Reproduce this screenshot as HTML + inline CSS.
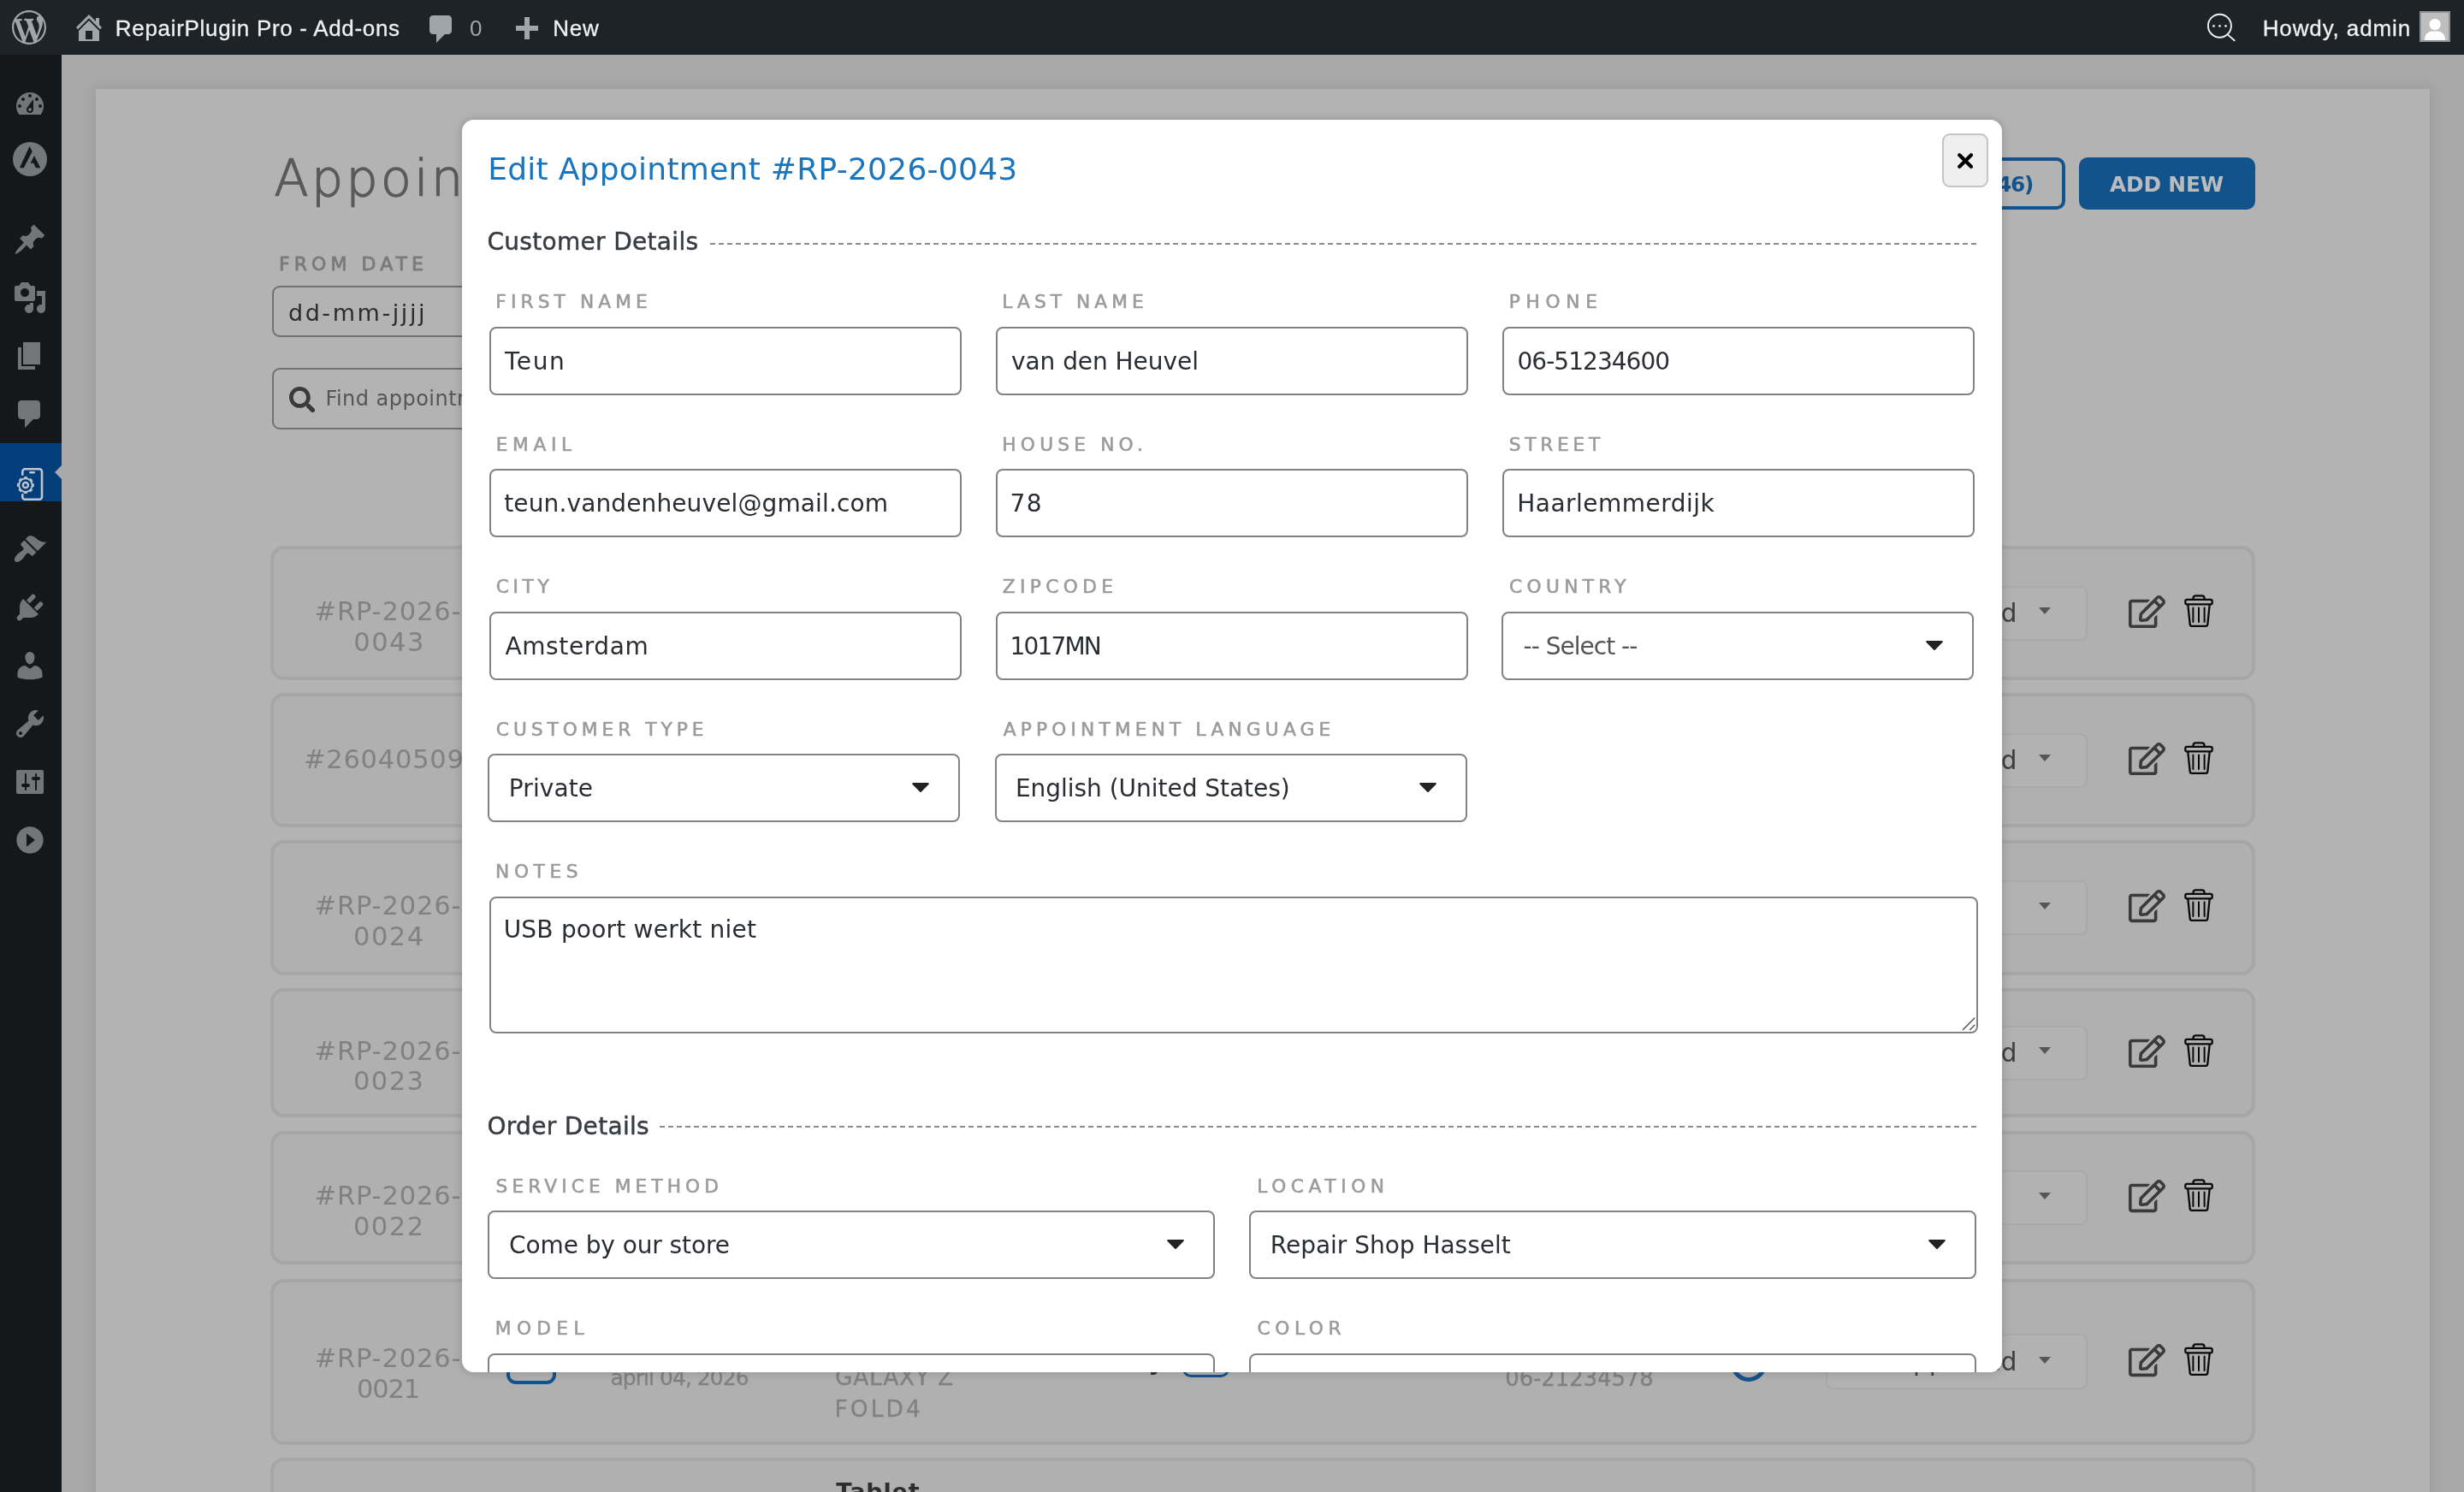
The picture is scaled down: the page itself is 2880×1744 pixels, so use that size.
<!DOCTYPE html>
<html lang="en"><head><meta charset="utf-8"><title>Appointments - RepairPlugin Pro</title>
<style>
*{box-sizing:border-box}
html,body{margin:0;padding:0}
body{width:2880px;height:1744px;overflow:hidden;position:relative;background:#a8a8a9;font-family:"DejaVu Sans","Liberation Sans",sans-serif}
@media (max-width:1600px){body{zoom:.5}}
#adminbar,#menu,#page,#modal{will-change:transform}
#page{position:absolute;left:0;top:0;width:2880px;height:1744px}
#adminbar{position:absolute;left:0;top:0;width:2880px;height:64px;background:#1d2327;z-index:50}
#menu{position:absolute;left:0;top:64px;width:72px;height:1680px;background:#14181b;z-index:40}
#card{position:absolute;left:112px;top:104px;width:2728px;height:1700px;background:#b3b3b3;box-shadow:0 0 14px rgba(0,0,0,.10)}
#modal{position:absolute;left:540px;top:140px;width:1800px;height:1464px;background:#fff;border-radius:14px;overflow:hidden;z-index:30;}
#mshadow{position:absolute;left:540px;top:140px;width:1800px;height:1464px;border-radius:14px;box-shadow:0 0 12px rgba(0,0,0,.2);z-index:29}
.in{position:absolute;height:80px;border:2px solid #818383;border-radius:8px;background:#fff}
.sel{position:absolute;height:80px;border:2px solid #818383;border-radius:8px;background:#fff}
.dash{position:absolute;height:2px;background:repeating-linear-gradient(90deg,#8b8b8b 0 6px,transparent 6px 10px)}
</style></head><body>

<div id="adminbar">
<svg style="position:absolute;left:14px;top:12px;" width="40" height="40" viewBox="0 0 20 20"><path fill="#a0a5aa" d="M20 10c0-5.51-4.49-10-10-10C4.48 0 0 4.49 0 10c0 5.52 4.48 10 10 10 5.51 0 10-4.48 10-10zM7.78 15.37L4.37 6.22c.55-.02 1.17-.08 1.17-.08.5-.06.44-1.13-.06-1.11 0 0-1.45.11-2.37.11-.18 0-.37 0-.58-.01C4.12 2.69 6.87 1.11 10 1.11c2.33 0 4.45.87 6.05 2.34-.68-.11-1.65.39-1.65 1.58 0 .74.45 1.36.9 2.1.35.61.55 1.36.55 2.46 0 1.49-1.4 5-1.4 5l-3.03-8.37c.54-.02.82-.17.82-.17.5-.05.44-1.25-.06-1.22 0 0-1.44.12-2.38.12-.87 0-2.33-.12-2.33-.12-.5-.03-.56 1.2-.06 1.22l.92.08 1.26 3.41zM17.41 10c.24-.64.74-1.87.43-4.25.7 1.29 1.05 2.71 1.05 4.25 0 3.29-1.73 6.24-4.4 7.78.97-2.59 1.94-5.2 2.92-7.78zM6.1 18.09C3.12 16.65 1.11 13.53 1.11 10c0-1.3.23-2.48.72-3.59C3.25 10.3 4.67 14.2 6.1 18.09zm4.03-6.63l2.58 6.98c-.86.29-1.76.45-2.71.45-.79 0-1.57-.11-2.29-.33.81-2.38 1.62-4.74 2.42-7.1z"/></svg>
<svg style="position:absolute;left:84px;top:12px;" width="40" height="40" viewBox="0 0 20 20"><path fill="#a0a5aa" d="M16 8.5l1.53 1.53-1.06 1.06L10 4.62l-6.47 6.47-1.06-1.06L10 2.5l4 4v-2h2v4zm-6-2.46l6 5.99V18H4v-5.97zM12 17v-5H8v5h4z"/></svg>
<span style="position:absolute;left:134.87px;top:20.0px;font-family:'Liberation Sans','DejaVu Sans',sans-serif;font-size:26px;line-height:1;color:#f0f0f1;font-weight:400;letter-spacing:0.688px;white-space:nowrap;-webkit-text-stroke:0.3px #f0f0f1;">RepairPlugin Pro - Add-ons</span>
<svg style="position:absolute;left:496px;top:14px;" width="40" height="40" viewBox="0 0 20 20"><path fill="#a0a5aa" d="M5 2h9c1.1 0 2 .9 2 2v7c0 1.1-.9 2-2 2h-2l-5 5v-5H5c-1.1 0-2-.9-2-2V4c0-1.1.9-2 2-2z"/></svg>
<span style="position:absolute;left:549.00px;top:20.0px;font-family:'Liberation Sans','DejaVu Sans',sans-serif;font-size:26px;line-height:1;color:#a0a5aa;font-weight:400;letter-spacing:0.000px;white-space:nowrap;">0</span>
<svg style="position:absolute;left:594.5px;top:15.5px;" width="40" height="40" viewBox="0 0 20 20"><path fill="#a0a5aa" d="M17 7v3h-5v5H9v-5H4V7h5V2h3v5h5z"/></svg>
<span style="position:absolute;left:646.37px;top:20.0px;font-family:'Liberation Sans','DejaVu Sans',sans-serif;font-size:26px;line-height:1;color:#f0f0f1;font-weight:400;letter-spacing:0.728px;white-space:nowrap;-webkit-text-stroke:0.3px #f0f0f1;">New</span>
<svg style="position:absolute;left:2576px;top:12px" width="44" height="44" viewBox="0 0 44 44"><circle cx="18.400" cy="18.200" r="13.500" fill="none" stroke="#f0f0f1" stroke-width="1.900"/><path d="M28 28.600L35.600 35.300" stroke="#f0f0f1" stroke-width="1.900" stroke-linecap="round"/><circle cx="11.500" cy="18.400" r="1.350" fill="#f0f0f1"/><circle cx="18.500" cy="18.400" r="1.350" fill="#f0f0f1"/><circle cx="25.500" cy="18.400" r="1.350" fill="#f0f0f1"/></svg>
<span style="position:absolute;left:2644.67px;top:20.0px;font-family:'Liberation Sans','DejaVu Sans',sans-serif;font-size:26px;line-height:1;color:#f0f0f1;font-weight:400;letter-spacing:0.883px;white-space:nowrap;-webkit-text-stroke:0.3px #f0f0f1;">Howdy, admin</span>
<div style="position:absolute;left:2828px;top:13px;width:36px;height:36px;background:#bebebe;border:2px solid #8f9295;overflow:hidden"><svg width="32" height="32" viewBox="0 0 32 32" style="position:absolute;left:0;top:0"><circle cx="16.100" cy="13.500" r="6.600" fill="#fff"/><path d="M4 32c0-7 3.500-9.500 8-10.500h8c4.500 1 8 3.500 8 10.500z" fill="#fff"/></svg></div>
</div>
<div id="menu">
<svg style="position:absolute;left:15.0px;top:38.0px;" width="40" height="40" viewBox="0 0 20 20"><path fill="#737679" d="M3.76 16h12.48c1.1-1.37 1.76-3.11 1.76-5 0-4.42-3.58-8-8-8s-8 3.58-8 8c0 1.89.66 3.63 1.76 5zM10 4c.55 0 1 .45 1 1s-.45 1-1 1-1-.45-1-1 .45-1 1-1zM6 6c.55 0 1 .45 1 1s-.45 1-1 1-1-.45-1-1 .45-1 1-1zm8 0c.55 0 1 .45 1 1s-.45 1-1 1-1-.45-1-1 .45-1 1-1zm-5.37 5.55L12 7v6c0 1.1-.9 2-2 2s-2-.9-2-2c0-.57.24-1.08.63-1.45zM4 10c.55 0 1 .45 1 1s-.45 1-1 1-1-.45-1-1 .45-1 1-1zm12 0c.55 0 1 .45 1 1s-.45 1-1 1-1-.45-1-1 .45-1 1-1zm-5 3c0-.55-.45-1-1-1s-1 .45-1 1 .45 1 1 1 1-.45 1-1z"/></svg>
<svg style="position:absolute;left:15px;top:102px" width="40" height="40" viewBox="0 0 40 40"><circle cx="20" cy="20" r="20" fill="#73787b"/><path d="M19.500 5.100l3.200 5.800-9.900 19.300H7.900z M25 16.100l7.300 14.100H27l-2.700-5.400h-3.700z" fill="#14181b"/></svg>
<svg style="position:absolute;left:15.0px;top:196.0px;" width="40" height="40" viewBox="0 0 20 20"><path fill="#737679" d="M10.44 3.02l1.82-1.82 6.36 6.35-1.83 1.82c-1.05-.68-2.48-.57-3.41.36l-.75.75c-.92.93-1.04 2.35-.35 3.41l-1.83 1.82-2.41-2.41-2.8 2.79c-.42.42-3.38 2.71-3.8 2.29s1.86-3.39 2.28-3.81l2.79-2.79L4.1 9.36l1.83-1.82c1.05.69 2.48.57 3.4-.36l.75-.75c.93-.92 1.05-2.35.36-3.41z"/></svg>
<svg style="position:absolute;left:15.0px;top:264.0px;" width="40" height="40" viewBox="0 0 20 20"><path fill="#737679" d="M13 11V4c0-.55-.45-1-1-1h-1.67L9 1H5L3.67 3H2c-.55 0-1 .45-1 1v7c0 .55.45 1 1 1h10c.55 0 1-.45 1-1zM7 4.5c1.38 0 2.5 1.12 2.5 2.5S8.38 9.5 7 9.5 4.5 8.38 4.5 7 5.62 4.5 7 4.5zM14 6h5v10.5c0 1.38-1.12 2.5-2.5 2.5S14 17.880 14 16.5s1.12-2.5 2.5-2.5c.17 0 .34.02.5.05V9h-3V6zm-4 8.050V13h2v3.5c0 1.38-1.12 2.5-2.5 2.5S7 17.880 7 16.5 8.12 14 9.5 14c.17 0 .34.02.5.05z"/></svg>
<svg style="position:absolute;left:15.0px;top:332.0px;" width="40" height="40" viewBox="0 0 20 20"><path fill="#737679" d="M6 15V2h10v13H6zm-1 1h8v2H3V5h2v11z"/></svg>
<svg style="position:absolute;left:15.0px;top:400.0px;" width="40" height="40" viewBox="0 0 20 20"><path fill="#737679" d="M5 2h9c1.1 0 2 .9 2 2v7c0 1.1-.9 2-2 2h-2l-5 5v-5H5c-1.1 0-2-.9-2-2V4c0-1.1.9-2 2-2z"/></svg>
<div style="position:absolute;left:0;top:454px;width:72px;height:68px;background:#033e7a"></div>
<div style="position:absolute;left:64px;top:480px;width:0;height:0;border-top:8px solid transparent;border-bottom:8px solid transparent;border-right:8px solid #a8a8a9"></div>
<svg style="position:absolute;left:8px;top:466px" width="64" height="64" viewBox="0 0 64 64"><path d="M18.300 24.800V21.300a3 3 0 0 1 3-3H38a3 3 0 0 1 3 3V50.800a3 3 0 0 1-3 3H21.300a3 3 0 0 1-3-3V48.400" fill="none" stroke="#c0c6d0" stroke-width="2.600" stroke-linecap="round"/><path d="M27.400 22.200h4.400" stroke="#c0c6d0" stroke-width="2.400" stroke-linecap="round"/><circle cx="21.900" cy="37.100" r="3.100" fill="none" stroke="#c0c6d0" stroke-width="2.300"/><circle cx="21.900" cy="37.100" r="7.800" fill="none" stroke="#c0c6d0" stroke-width="1.900"/><circle cx="21.900" cy="37.100" r="9.100" fill="none" stroke="#c0c6d0" stroke-width="1.800" stroke-dasharray="4.100 3.050" stroke-dashoffset="2.050"/></svg>
<svg style="position:absolute;left:15.0px;top:558.0px;" width="40" height="40" viewBox="0 0 20 20"><path fill="#737679" d="M14.48 11.06L7.41 3.99l1.5-1.5c.5-.56 2.3-.47 3.51.32 1.21.8 1.43 1.28 2.91 2.1 1.18.64 2.45 1.26 4.45.85zm-.71.71L6.7 4.7 4.93 6.47c-.39.39-.39 1.02 0 1.41l1.06 1.06c.39.39.39 1.03 0 1.42-.6.6-1.43 1.11-2.21 1.69-.35.26-.7.53-1.01.84C1.43 14.23.4 16.08 1.4 17.07c.99 1 2.84-.03 4.18-1.36.31-.31.58-.66.85-1.02.57-.78 1.08-1.61 1.69-2.21.39-.39 1.02-.39 1.41 0l1.06 1.06c.39.39 1.02.39 1.41 0z"/></svg>
<svg style="position:absolute;left:15.0px;top:626.0px;" width="40" height="40" viewBox="0 0 20 20"><path fill="#737679" d="M13.11 4.36L9.87 7.6 8 5.73l3.24-3.24c.35-.34 1.05-.2 1.56.32.52.51.66 1.21.31 1.55zm-8 1.77l.91-1.12 9.01 9.01-1.19.84c-.71.71-2.63 1.16-3.82 1.16H6.14L4.9 17.26c-.59.59-1.54.59-2.12 0-.59-.58-.59-1.53 0-2.12l1.24-1.24v-3.88c0-1.13.4-3.19 1.09-3.89zm7.26 3.97l3.24-3.24c.34-.35 1.04-.21 1.55.31.52.51.66 1.21.31 1.55l-3.24 3.25z"/></svg>
<svg style="position:absolute;left:15.0px;top:694.0px;" width="40" height="40" viewBox="0 0 20 20"><path fill="#737679" d="M10 9.25c-2.27 0-2.73-3.44-2.73-3.44C7 4.02 7.82 2 9.97 2c2.16 0 2.98 2.02 2.71 3.81 0 0-.41 3.44-2.68 3.44zm0 2.57L12.72 10c2.39 0 4.52 2.33 4.52 4.53v2.49s-3.65 1.13-7.24 1.13c-3.65 0-7.24-1.13-7.24-1.13v-2.49c0-2.25 1.94-4.48 4.47-4.48z"/></svg>
<svg style="position:absolute;left:15.0px;top:762.0px;" width="40" height="40" viewBox="0 0 20 20"><path fill="#737679" d="M16.68 9.77c-1.34 1.34-3.3 1.67-4.95.99l-5.41 6.52c-.99.99-2.59.99-3.58 0s-.99-2.59 0-3.57l6.52-5.42c-.68-1.65-.35-3.61.99-4.95 1.28-1.28 3.12-1.62 4.72-1.06l-2.89 2.89 2.82 2.82 2.86-2.87c.53 1.58.18 3.39-1.08 4.65zM3.81 16.21c.4.39 1.04.39 1.43 0 .4-.4.4-1.04 0-1.43-.39-.4-1.03-.4-1.43 0-.39.39-.39 1.03 0 1.43z"/></svg>
<svg style="position:absolute;left:15.0px;top:830.0px;" width="40" height="40" viewBox="0 0 20 20"><path fill="#737679" d="M18 16V4c0-.55-.45-1-1-1H3c-.55 0-1 .45-1 1v12c0 .55.45 1 1 1h14c.55 0 1-.45 1-1zM8 11h1c.55 0 1 .45 1 1s-.45 1-1 1H8v1.5c0 .28-.22.5-.5.5s-.5-.22-.5-.5V13H6c-.55 0-1-.45-1-1s.45-1 1-1h1V5.5c0-.28.22-.5.5-.5s.5.22.5.5V11zm5-2h-1c-.55 0-1-.45-1-1s.45-1 1-1h1V5.5c0-.28.22-.5.5-.5s.5.22.5.5V7h1c.55 0 1 .45 1 1s-.45 1-1 1h-1v5.5c0 .28-.22.5-.5.5s-.5-.22-.5-.5V9z"/></svg>
<svg style="position:absolute;left:15.0px;top:898.0px;transform:rotate(180deg)" width="40" height="40" viewBox="0 0 20 20"><path fill="#737679" d="M10 2.16c4.33 0 7.84 3.51 7.84 7.84s-3.51 7.84-7.84 7.84S2.16 14.33 2.16 10 5.67 2.16 10 2.16zm2 11.72V6.12L7 10z"/></svg>
</div>
<div id="page"><div id="card"></div>
<span style="position:absolute;left:320.56px;top:180.3px;font-family:'DejaVu Sans','Liberation Sans',sans-serif;font-size:58.5px;line-height:1;color:#5a5a5a;font-weight:200;letter-spacing:3.424px;white-space:nowrap;-webkit-text-stroke:1.4px #5a5a5a;">Appointments</span>
<span style="position:absolute;left:326.04px;top:297.8px;font-family:'DejaVu Sans','Liberation Sans',sans-serif;font-size:22px;line-height:1;color:#7a7a7a;font-weight:400;letter-spacing:5.063px;white-space:nowrap;-webkit-text-stroke:0.8px #7a7a7a;">FROM DATE</span>
<div style="position:absolute;left:318px;top:334px;width:420px;height:60px;border:2px solid #707070;border-radius:9px"></div>
<span style="position:absolute;left:336.91px;top:351.5px;font-family:'DejaVu Sans','Liberation Sans',sans-serif;font-size:27px;line-height:1;color:#2c2c2c;font-weight:400;letter-spacing:2.583px;white-space:nowrap;">dd-mm-jjjj</span>
<div style="position:absolute;left:318px;top:430px;width:700px;height:72px;border:2px solid #707070;border-radius:9px"></div>
<svg style="position:absolute;left:337.7px;top:451.6px;" width="30.5" height="30.5" viewBox="0 0 512 512"><path fill="#3a3a3a" d="M505 442.7L405.3 343c-4.500-4.500-10.600-7-17-7H372c27.600-35.300 44-79.700 44-128C416 93.100 322.900 0 208 0S0 93.100 0 208s93.100 208 208 208c48.300 0 92.700-16.400 128-44v16.300c0 6.400 2.500 12.500 7 17l99.700 99.700c9.400 9.400 24.600 9.400 33.900 0l28.300-28.300c9.400-9.400 9.400-24.600.1-34zM208 336c-70.700 0-128-57.200-128-128 0-70.700 57.200-128 128-128 70.700 0 128 57.200 128 128 0 70.700-57.200 128-128 128z"/></svg>
<span style="position:absolute;left:380.44px;top:454.0px;font-family:'DejaVu Sans','Liberation Sans',sans-serif;font-size:24px;line-height:1;color:#555;font-weight:400;letter-spacing:0.471px;white-space:nowrap;">Find appointments</span>
<div style="position:absolute;left:2100px;top:184px;width:314px;height:61px;border:4px solid #14538c;border-radius:10px"></div>
<span style="position:absolute;left:2323.85px;top:203.8px;font-family:'DejaVu Sans','Liberation Sans',sans-serif;font-size:24.8px;line-height:1;color:#14538c;font-weight:700;letter-spacing:-1.200px;white-space:nowrap;">(46)</span>
<div style="position:absolute;left:2430px;top:184px;width:206px;height:61px;background:#11538a;border-radius:10px"></div>
<span style="position:absolute;left:2465.88px;top:203.8px;font-family:'DejaVu Sans','Liberation Sans',sans-serif;font-size:24.8px;line-height:1;color:#b9bcbf;font-weight:700;letter-spacing:-0.126px;white-space:nowrap;">ADD NEW</span>
<div style="position:absolute;left:316px;top:638px;width:2320px;height:157px;background:#b0b0b1;border:4px solid #a6a6a7;border-radius:16px"></div>
<span style="position:absolute;left:367.55px;top:700.0px;font-family:'DejaVu Sans','Liberation Sans',sans-serif;font-size:30.5px;line-height:1;color:#818183;font-weight:400;letter-spacing:0.855px;white-space:nowrap;">#RP-2026-</span>
<span style="position:absolute;left:413.19px;top:735.9px;font-family:'DejaVu Sans','Liberation Sans',sans-serif;font-size:30.5px;line-height:1;color:#818183;font-weight:400;letter-spacing:1.544px;white-space:nowrap;">0043</span>
<div style="position:absolute;left:2134px;top:684.5px;width:306px;height:64px;border:2px solid #a9a9aa;border-radius:8px;background:#b2b2b3"></div>
<span style="position:absolute;left:2215.77px;top:702.9px;font-family:'DejaVu Sans','Liberation Sans',sans-serif;font-size:29.5px;line-height:1;color:#3e3e3e;font-weight:400;letter-spacing:0.045px;white-space:nowrap;">Approved</span>
<div style="position:absolute;left:2382.800px;top:710.3px;width:0;height:0;border-left:7px solid transparent;border-right:7px solid transparent;border-top:8px solid #565656"></div>
<svg style="position:absolute;left:2487.5px;top:695.9px;height:38.200px" width="43" height="43" viewBox="0 0 576 512"><path fill="#3a3a3a" d="M402.3 344.9l32-32c5-5 13.7-1.5 13.7 5.7V464c0 26.5-21.5 48-48 48H48c-26.5 0-48-21.5-48-48V112c0-26.5 21.5-48 48-48h273.5c7.1 0 10.7 8.6 5.7 13.7l-32 32c-1.5 1.5-3.5 2.3-5.700 2.300H48v352h352V350.5c0-2.1.8-4.1 2.300-5.600zm156.600-201.800L296.300 405.700l-90.400 10c-26.200 2.900-48.500-19.200-45.600-45.600l10-90.400L432.900 17.100c22.900-22.900 59.900-22.900 82.700 0l43.200 43.200c22.900 22.900 22.900 60 .1 82.800zM460.100 174L402 115.900 216.200 301.800l-7.300 65.300 65.300-7.300L460.100 174zm64.800-79.700l-43.200-43.200c-4.100-4.100-10.800-4.100-14.800 0L436 82l58.100 58.100 30.900-30.900c4-4.200 4-10.800-.1-14.900z"/></svg>
<svg style="position:absolute;left:2553px;top:694.8px" width="34" height="38" viewBox="0 0 34 38"><path d="M10.500 6V4.200a2.900 2.900 0 0 1 2.900-2.900h7.200a2.900 2.900 0 0 1 2.900 2.900V6" fill="none" stroke="#0a0a0a" stroke-width="2.300"/><rect x="1.300" y="5.800" width="31.400" height="5.600" rx="2" fill="none" stroke="#0a0a0a" stroke-width="2.300"/><path d="M4.300 11.600L6.700 34.800a2.200 2.200 0 0 0 2.200 2h16.200a2.200 2.200 0 0 0 2.200-2L29.700 11.600" fill="none" stroke="#0a0a0a" stroke-width="2.300"/><path d="M10.400 15.500v16.500M17 15.500v16.500M23.600 15.500v16.500" stroke="#0a0a0a" stroke-width="2" stroke-linecap="round"/></svg>
<div style="position:absolute;left:316px;top:810px;width:2320px;height:157px;background:#b0b0b1;border:4px solid #a6a6a7;border-radius:16px"></div>
<span style="position:absolute;left:354.95px;top:872.8px;font-family:'DejaVu Sans','Liberation Sans',sans-serif;font-size:30.5px;line-height:1;color:#818183;font-weight:400;letter-spacing:0.773px;white-space:nowrap;">#260405097</span>
<div style="position:absolute;left:2134px;top:856.5px;width:306px;height:64px;border:2px solid #a9a9aa;border-radius:8px;background:#b2b2b3"></div>
<span style="position:absolute;left:2215.77px;top:874.9px;font-family:'DejaVu Sans','Liberation Sans',sans-serif;font-size:29.5px;line-height:1;color:#3e3e3e;font-weight:400;letter-spacing:0.045px;white-space:nowrap;">Approved</span>
<div style="position:absolute;left:2382.800px;top:882.3px;width:0;height:0;border-left:7px solid transparent;border-right:7px solid transparent;border-top:8px solid #565656"></div>
<svg style="position:absolute;left:2487.5px;top:867.9px;height:38.200px" width="43" height="43" viewBox="0 0 576 512"><path fill="#3a3a3a" d="M402.3 344.9l32-32c5-5 13.7-1.5 13.7 5.7V464c0 26.5-21.5 48-48 48H48c-26.5 0-48-21.5-48-48V112c0-26.5 21.5-48 48-48h273.5c7.1 0 10.7 8.6 5.7 13.7l-32 32c-1.5 1.5-3.5 2.3-5.700 2.300H48v352h352V350.5c0-2.1.8-4.1 2.300-5.600zm156.600-201.800L296.300 405.700l-90.400 10c-26.200 2.900-48.500-19.200-45.600-45.600l10-90.400L432.900 17.100c22.900-22.900 59.900-22.900 82.700 0l43.200 43.200c22.900 22.900 22.900 60 .1 82.800zM460.100 174L402 115.900 216.200 301.800l-7.300 65.300 65.300-7.300L460.100 174zm64.800-79.700l-43.200-43.200c-4.100-4.100-10.800-4.100-14.800 0L436 82l58.100 58.100 30.900-30.900c4-4.200 4-10.800-.1-14.900z"/></svg>
<svg style="position:absolute;left:2553px;top:866.8px" width="34" height="38" viewBox="0 0 34 38"><path d="M10.500 6V4.200a2.900 2.900 0 0 1 2.900-2.900h7.200a2.900 2.900 0 0 1 2.900 2.900V6" fill="none" stroke="#0a0a0a" stroke-width="2.300"/><rect x="1.300" y="5.800" width="31.400" height="5.600" rx="2" fill="none" stroke="#0a0a0a" stroke-width="2.300"/><path d="M4.300 11.600L6.700 34.800a2.200 2.200 0 0 0 2.200 2h16.200a2.200 2.200 0 0 0 2.200-2L29.700 11.600" fill="none" stroke="#0a0a0a" stroke-width="2.300"/><path d="M10.400 15.500v16.500M17 15.500v16.500M23.600 15.500v16.500" stroke="#0a0a0a" stroke-width="2" stroke-linecap="round"/></svg>
<div style="position:absolute;left:316px;top:982px;width:2320px;height:158px;background:#b0b0b1;border:4px solid #a6a6a7;border-radius:16px"></div>
<span style="position:absolute;left:367.55px;top:1043.5px;font-family:'DejaVu Sans','Liberation Sans',sans-serif;font-size:30.5px;line-height:1;color:#818183;font-weight:400;letter-spacing:0.855px;white-space:nowrap;">#RP-2026-</span>
<span style="position:absolute;left:412.99px;top:1079.5px;font-family:'DejaVu Sans','Liberation Sans',sans-serif;font-size:30.5px;line-height:1;color:#818183;font-weight:400;letter-spacing:1.501px;white-space:nowrap;">0024</span>
<div style="position:absolute;left:2134px;top:1029.0px;width:306px;height:64px;border:2px solid #a9a9aa;border-radius:8px;background:#b2b2b3"></div>
<div style="position:absolute;left:2382.800px;top:1054.8px;width:0;height:0;border-left:7px solid transparent;border-right:7px solid transparent;border-top:8px solid #565656"></div>
<svg style="position:absolute;left:2487.5px;top:1040.4px;height:38.200px" width="43" height="43" viewBox="0 0 576 512"><path fill="#3a3a3a" d="M402.3 344.9l32-32c5-5 13.7-1.5 13.7 5.7V464c0 26.5-21.5 48-48 48H48c-26.5 0-48-21.5-48-48V112c0-26.5 21.5-48 48-48h273.5c7.1 0 10.7 8.6 5.7 13.7l-32 32c-1.5 1.5-3.5 2.3-5.700 2.300H48v352h352V350.5c0-2.1.8-4.1 2.300-5.600zm156.600-201.800L296.300 405.700l-90.400 10c-26.200 2.900-48.500-19.200-45.600-45.600l10-90.400L432.900 17.100c22.900-22.900 59.900-22.900 82.700 0l43.200 43.200c22.900 22.900 22.900 60 .1 82.800zM460.100 174L402 115.900 216.200 301.800l-7.300 65.300 65.300-7.300L460.100 174zm64.800-79.700l-43.200-43.200c-4.100-4.100-10.800-4.100-14.800 0L436 82l58.100 58.100 30.900-30.900c4-4.200 4-10.800-.1-14.900z"/></svg>
<svg style="position:absolute;left:2553px;top:1039.3px" width="34" height="38" viewBox="0 0 34 38"><path d="M10.500 6V4.200a2.900 2.900 0 0 1 2.900-2.900h7.200a2.900 2.900 0 0 1 2.900 2.900V6" fill="none" stroke="#0a0a0a" stroke-width="2.300"/><rect x="1.300" y="5.800" width="31.400" height="5.600" rx="2" fill="none" stroke="#0a0a0a" stroke-width="2.300"/><path d="M4.300 11.600L6.700 34.800a2.200 2.200 0 0 0 2.200 2h16.200a2.200 2.200 0 0 0 2.200-2L29.700 11.600" fill="none" stroke="#0a0a0a" stroke-width="2.300"/><path d="M10.400 15.500v16.500M17 15.500v16.500M23.600 15.500v16.500" stroke="#0a0a0a" stroke-width="2" stroke-linecap="round"/></svg>
<div style="position:absolute;left:316px;top:1155px;width:2320px;height:151px;background:#b0b0b1;border:4px solid #a6a6a7;border-radius:16px"></div>
<span style="position:absolute;left:367.55px;top:1213.5px;font-family:'DejaVu Sans','Liberation Sans',sans-serif;font-size:30.5px;line-height:1;color:#818183;font-weight:400;letter-spacing:0.855px;white-space:nowrap;">#RP-2026-</span>
<span style="position:absolute;left:412.99px;top:1249.2px;font-family:'DejaVu Sans','Liberation Sans',sans-serif;font-size:30.5px;line-height:1;color:#818183;font-weight:400;letter-spacing:1.444px;white-space:nowrap;">0023</span>
<div style="position:absolute;left:2134px;top:1198.5px;width:306px;height:64px;border:2px solid #a9a9aa;border-radius:8px;background:#b2b2b3"></div>
<span style="position:absolute;left:2215.77px;top:1216.9px;font-family:'DejaVu Sans','Liberation Sans',sans-serif;font-size:29.5px;line-height:1;color:#3e3e3e;font-weight:400;letter-spacing:0.045px;white-space:nowrap;">Approved</span>
<div style="position:absolute;left:2382.800px;top:1224.3px;width:0;height:0;border-left:7px solid transparent;border-right:7px solid transparent;border-top:8px solid #565656"></div>
<svg style="position:absolute;left:2487.5px;top:1209.9px;height:38.200px" width="43" height="43" viewBox="0 0 576 512"><path fill="#3a3a3a" d="M402.3 344.9l32-32c5-5 13.7-1.5 13.7 5.7V464c0 26.5-21.5 48-48 48H48c-26.5 0-48-21.5-48-48V112c0-26.5 21.5-48 48-48h273.5c7.1 0 10.7 8.6 5.7 13.7l-32 32c-1.5 1.5-3.5 2.3-5.700 2.300H48v352h352V350.5c0-2.1.8-4.1 2.300-5.600zm156.600-201.800L296.300 405.700l-90.400 10c-26.200 2.900-48.500-19.200-45.600-45.600l10-90.400L432.900 17.100c22.900-22.900 59.900-22.900 82.700 0l43.200 43.200c22.900 22.900 22.900 60 .1 82.800zM460.100 174L402 115.900 216.200 301.800l-7.300 65.300 65.300-7.300L460.100 174zm64.800-79.700l-43.200-43.200c-4.100-4.100-10.800-4.100-14.800 0L436 82l58.100 58.100 30.900-30.900c4-4.200 4-10.800-.1-14.900z"/></svg>
<svg style="position:absolute;left:2553px;top:1208.8px" width="34" height="38" viewBox="0 0 34 38"><path d="M10.500 6V4.200a2.900 2.900 0 0 1 2.900-2.900h7.200a2.900 2.900 0 0 1 2.900 2.900V6" fill="none" stroke="#0a0a0a" stroke-width="2.300"/><rect x="1.300" y="5.800" width="31.400" height="5.600" rx="2" fill="none" stroke="#0a0a0a" stroke-width="2.300"/><path d="M4.300 11.600L6.700 34.800a2.200 2.200 0 0 0 2.200 2h16.200a2.200 2.200 0 0 0 2.200-2L29.700 11.600" fill="none" stroke="#0a0a0a" stroke-width="2.300"/><path d="M10.400 15.500v16.500M17 15.500v16.500M23.600 15.500v16.500" stroke="#0a0a0a" stroke-width="2" stroke-linecap="round"/></svg>
<div style="position:absolute;left:316px;top:1322px;width:2320px;height:156px;background:#b0b0b1;border:4px solid #a6a6a7;border-radius:16px"></div>
<span style="position:absolute;left:367.55px;top:1383.0px;font-family:'DejaVu Sans','Liberation Sans',sans-serif;font-size:30.5px;line-height:1;color:#818183;font-weight:400;letter-spacing:0.855px;white-space:nowrap;">#RP-2026-</span>
<span style="position:absolute;left:412.99px;top:1418.8px;font-family:'DejaVu Sans','Liberation Sans',sans-serif;font-size:30.5px;line-height:1;color:#818183;font-weight:400;letter-spacing:1.481px;white-space:nowrap;">0022</span>
<div style="position:absolute;left:2134px;top:1368.0px;width:306px;height:64px;border:2px solid #a9a9aa;border-radius:8px;background:#b2b2b3"></div>
<div style="position:absolute;left:2382.800px;top:1393.8px;width:0;height:0;border-left:7px solid transparent;border-right:7px solid transparent;border-top:8px solid #565656"></div>
<svg style="position:absolute;left:2487.5px;top:1379.4px;height:38.200px" width="43" height="43" viewBox="0 0 576 512"><path fill="#3a3a3a" d="M402.3 344.9l32-32c5-5 13.7-1.5 13.7 5.7V464c0 26.5-21.5 48-48 48H48c-26.5 0-48-21.5-48-48V112c0-26.5 21.5-48 48-48h273.5c7.1 0 10.7 8.6 5.7 13.7l-32 32c-1.5 1.5-3.5 2.3-5.700 2.300H48v352h352V350.5c0-2.1.8-4.1 2.300-5.600zm156.600-201.800L296.300 405.700l-90.400 10c-26.200 2.900-48.500-19.200-45.600-45.600l10-90.400L432.900 17.100c22.900-22.900 59.900-22.900 82.700 0l43.200 43.200c22.900 22.900 22.900 60 .1 82.800zM460.100 174L402 115.900 216.200 301.800l-7.300 65.300 65.300-7.300L460.100 174zm64.800-79.700l-43.200-43.200c-4.100-4.100-10.800-4.100-14.800 0L436 82l58.100 58.100 30.900-30.900c4-4.200 4-10.800-.1-14.900z"/></svg>
<svg style="position:absolute;left:2553px;top:1378.3px" width="34" height="38" viewBox="0 0 34 38"><path d="M10.500 6V4.200a2.900 2.900 0 0 1 2.900-2.900h7.200a2.900 2.900 0 0 1 2.900 2.900V6" fill="none" stroke="#0a0a0a" stroke-width="2.300"/><rect x="1.300" y="5.800" width="31.400" height="5.600" rx="2" fill="none" stroke="#0a0a0a" stroke-width="2.300"/><path d="M4.300 11.600L6.700 34.800a2.200 2.200 0 0 0 2.200 2h16.200a2.200 2.200 0 0 0 2.200-2L29.700 11.600" fill="none" stroke="#0a0a0a" stroke-width="2.300"/><path d="M10.400 15.500v16.500M17 15.500v16.500M23.600 15.500v16.500" stroke="#0a0a0a" stroke-width="2" stroke-linecap="round"/></svg>
<div style="position:absolute;left:316px;top:1495px;width:2320px;height:194px;background:#b0b0b1;border:4px solid #a6a6a7;border-radius:16px"></div>
<span style="position:absolute;left:367.55px;top:1573.2px;font-family:'DejaVu Sans','Liberation Sans',sans-serif;font-size:30.5px;line-height:1;color:#818183;font-weight:400;letter-spacing:0.855px;white-space:nowrap;">#RP-2026-</span>
<span style="position:absolute;left:416.99px;top:1609.0px;font-family:'DejaVu Sans','Liberation Sans',sans-serif;font-size:30.5px;line-height:1;color:#818183;font-weight:400;letter-spacing:-1.165px;white-space:nowrap;">0021</span>
<div style="position:absolute;left:2134px;top:1558.5px;width:306px;height:65px;border:2px solid #a9a9aa;border-radius:8px;background:#b2b2b3"></div>
<span style="position:absolute;left:2215.77px;top:1578.4px;font-family:'DejaVu Sans','Liberation Sans',sans-serif;font-size:29.5px;line-height:1;color:#3e3e3e;font-weight:400;letter-spacing:0.045px;white-space:nowrap;">Approved</span>
<div style="position:absolute;left:2382.800px;top:1585.8px;width:0;height:0;border-left:7px solid transparent;border-right:7px solid transparent;border-top:8px solid #565656"></div>
<svg style="position:absolute;left:2487.5px;top:1571.4px;height:38.200px" width="43" height="43" viewBox="0 0 576 512"><path fill="#3a3a3a" d="M402.3 344.9l32-32c5-5 13.7-1.5 13.7 5.7V464c0 26.5-21.5 48-48 48H48c-26.5 0-48-21.5-48-48V112c0-26.5 21.5-48 48-48h273.5c7.1 0 10.7 8.6 5.7 13.7l-32 32c-1.5 1.5-3.5 2.3-5.700 2.300H48v352h352V350.5c0-2.1.8-4.1 2.300-5.600zm156.600-201.800L296.300 405.700l-90.400 10c-26.200 2.900-48.500-19.200-45.600-45.600l10-90.400L432.900 17.100c22.900-22.900 59.900-22.900 82.700 0l43.200 43.200c22.900 22.900 22.900 60 .1 82.800zM460.100 174L402 115.900 216.200 301.800l-7.300 65.300 65.300-7.300L460.100 174zm64.800-79.700l-43.200-43.200c-4.100-4.100-10.800-4.100-14.800 0L436 82l58.100 58.100 30.900-30.900c4-4.200 4-10.800-.1-14.900z"/></svg>
<svg style="position:absolute;left:2553px;top:1570.3px" width="34" height="38" viewBox="0 0 34 38"><path d="M10.500 6V4.200a2.900 2.900 0 0 1 2.900-2.900h7.200a2.900 2.900 0 0 1 2.900 2.900V6" fill="none" stroke="#0a0a0a" stroke-width="2.300"/><rect x="1.300" y="5.800" width="31.400" height="5.600" rx="2" fill="none" stroke="#0a0a0a" stroke-width="2.300"/><path d="M4.300 11.600L6.700 34.800a2.200 2.200 0 0 0 2.200 2h16.200a2.200 2.200 0 0 0 2.200-2L29.700 11.600" fill="none" stroke="#0a0a0a" stroke-width="2.300"/><path d="M10.400 15.500v16.500M17 15.500v16.500M23.600 15.500v16.500" stroke="#0a0a0a" stroke-width="2" stroke-linecap="round"/></svg>
<div style="position:absolute;left:316px;top:1704px;width:2320px;height:166px;background:#b0b0b1;border:4px solid #a6a6a7;border-radius:16px"></div>
<span style="position:absolute;left:367.55px;top:1774.2px;font-family:'DejaVu Sans','Liberation Sans',sans-serif;font-size:30.5px;line-height:1;color:#818183;font-weight:400;letter-spacing:0.855px;white-space:nowrap;">#RP-2026-</span>
<span style="position:absolute;left:411.99px;top:1810.2px;font-family:'DejaVu Sans','Liberation Sans',sans-serif;font-size:30.5px;line-height:1;color:#818183;font-weight:400;letter-spacing:1.938px;white-space:nowrap;">0020</span>
<div style="position:absolute;left:2134px;top:1755.0px;width:306px;height:64px;border:2px solid #a9a9aa;border-radius:8px;background:#b2b2b3"></div>
<span style="position:absolute;left:2215.77px;top:1773.4px;font-family:'DejaVu Sans','Liberation Sans',sans-serif;font-size:29.5px;line-height:1;color:#3e3e3e;font-weight:400;letter-spacing:0.045px;white-space:nowrap;">Approved</span>
<div style="position:absolute;left:2382.800px;top:1780.8px;width:0;height:0;border-left:7px solid transparent;border-right:7px solid transparent;border-top:8px solid #565656"></div>
<svg style="position:absolute;left:2487.5px;top:1766.4px;height:38.200px" width="43" height="43" viewBox="0 0 576 512"><path fill="#3a3a3a" d="M402.3 344.9l32-32c5-5 13.7-1.5 13.7 5.7V464c0 26.5-21.5 48-48 48H48c-26.5 0-48-21.5-48-48V112c0-26.5 21.5-48 48-48h273.5c7.1 0 10.7 8.6 5.7 13.7l-32 32c-1.5 1.5-3.5 2.3-5.700 2.300H48v352h352V350.5c0-2.1.8-4.1 2.300-5.600zm156.600-201.800L296.300 405.700l-90.400 10c-26.200 2.900-48.500-19.200-45.600-45.600l10-90.400L432.900 17.100c22.900-22.900 59.900-22.900 82.700 0l43.200 43.200c22.900 22.900 22.900 60 .1 82.800zM460.100 174L402 115.900 216.200 301.800l-7.300 65.300 65.300-7.300L460.100 174zm64.800-79.700l-43.200-43.200c-4.100-4.100-10.800-4.100-14.800 0L436 82l58.100 58.100 30.900-30.900c4-4.200 4-10.800-.1-14.900z"/></svg>
<svg style="position:absolute;left:2553px;top:1765.3px" width="34" height="38" viewBox="0 0 34 38"><path d="M10.500 6V4.200a2.900 2.900 0 0 1 2.900-2.900h7.200a2.900 2.900 0 0 1 2.900 2.900V6" fill="none" stroke="#0a0a0a" stroke-width="2.300"/><rect x="1.300" y="5.800" width="31.400" height="5.600" rx="2" fill="none" stroke="#0a0a0a" stroke-width="2.300"/><path d="M4.300 11.600L6.700 34.800a2.200 2.200 0 0 0 2.200 2h16.200a2.200 2.200 0 0 0 2.200-2L29.700 11.600" fill="none" stroke="#0a0a0a" stroke-width="2.300"/><path d="M10.400 15.500v16.500M17 15.500v16.500M23.600 15.500v16.500" stroke="#0a0a0a" stroke-width="2" stroke-linecap="round"/></svg>
<span style="position:absolute;left:713.50px;top:1597.8px;font-family:'DejaVu Sans','Liberation Sans',sans-serif;font-size:25px;line-height:1;color:#818183;font-weight:400;letter-spacing:-0.966px;white-space:nowrap;-webkit-text-stroke:0.3px #818183;">april 04, 2026</span>
<span style="position:absolute;left:976.01px;top:1596.6px;font-family:'DejaVu Sans','Liberation Sans',sans-serif;font-size:26.5px;line-height:1;color:#818183;font-weight:400;letter-spacing:0.728px;white-space:nowrap;-webkit-text-stroke:0.3px #818183;">GALAXY Z</span>
<span style="position:absolute;left:975.40px;top:1634.1px;font-family:'DejaVu Sans','Liberation Sans',sans-serif;font-size:26.5px;line-height:1;color:#818183;font-weight:400;letter-spacing:3.090px;white-space:nowrap;-webkit-text-stroke:0.3px #818183;">FOLD4</span>
<span style="position:absolute;left:1759.29px;top:1598.0px;font-family:'DejaVu Sans','Liberation Sans',sans-serif;font-size:26px;line-height:1;color:#818183;font-weight:400;letter-spacing:-0.131px;white-space:nowrap;-webkit-text-stroke:0.3px #818183;">06-21234578</span>
<div style="position:absolute;left:592px;top:1560px;width:58px;height:58px;border:4px solid #14538c;border-radius:11px"></div>
<div style="position:absolute;left:1382px;top:1560px;width:55px;height:50px;border:3px solid #14538c;border-radius:10px"></div>
<div style="position:absolute;left:2022.500px;top:1573px;width:42px;height:42px;border:5px solid #14538c;border-radius:50%"></div>
<span style="position:absolute;left:1253.82px;top:1577.8px;font-family:'DejaVu Sans','Liberation Sans',sans-serif;font-size:28px;line-height:1;color:#2e2e2e;font-weight:700;letter-spacing:0.000px;white-space:nowrap;">Galaxy</span>
<span style="position:absolute;left:977.37px;top:1730.0px;font-family:'DejaVu Sans','Liberation Sans',sans-serif;font-size:27px;line-height:1;color:#2e2e2e;font-weight:700;letter-spacing:0.859px;white-space:nowrap;">Tablet</span>
</div><div id="mshadow"></div><div id="modal">
<span style="position:absolute;left:30.17px;top:39.7px;font-family:'DejaVu Sans','Liberation Sans',sans-serif;font-size:36px;line-height:1;color:#1b75bc;font-weight:400;letter-spacing:0.268px;white-space:nowrap;">Edit Appointment #RP-2026-0043</span>
<div style="position:absolute;left:1730px;top:16px;width:54px;height:63px;border:2px solid #c4c4c4;border-radius:9px;background:#efefef"></div>
<svg style="position:absolute;left:1748px;top:38.500px" width="18.200" height="18" viewBox="0 0 18.200 18"><path d="M2.300 2.300l13.600 13.400M15.900 2.300l-13.600 13.400" stroke="#000" stroke-width="4.300" stroke-linecap="round"/></svg>
<span style="position:absolute;left:29.43px;top:129.3px;font-family:'DejaVu Sans','Liberation Sans',sans-serif;font-size:28px;line-height:1;color:#383c41;font-weight:400;letter-spacing:0.311px;white-space:nowrap;-webkit-text-stroke:0.45px #383c41;">Customer Details</span>
<div class="dash" style="left:290px;top:144px;width:1480px;background:repeating-linear-gradient(90deg,#8b8b8b 0 6px,transparent 6px 10.027px)"></div>
<span style="position:absolute;left:39.37px;top:202.4px;font-family:'DejaVu Sans','Liberation Sans',sans-serif;font-size:21.7px;line-height:1;color:#9b9b9b;font-weight:400;letter-spacing:5.113px;white-space:nowrap;-webkit-text-stroke:0.6px #9b9b9b;">FIRST NAME</span>
<span style="position:absolute;left:631.37px;top:202.4px;font-family:'DejaVu Sans','Liberation Sans',sans-serif;font-size:21.7px;line-height:1;color:#9b9b9b;font-weight:400;letter-spacing:5.068px;white-space:nowrap;-webkit-text-stroke:0.6px #9b9b9b;">LAST NAME</span>
<span style="position:absolute;left:1223.67px;top:202.4px;font-family:'DejaVu Sans','Liberation Sans',sans-serif;font-size:21.7px;line-height:1;color:#9b9b9b;font-weight:400;letter-spacing:6.698px;white-space:nowrap;-webkit-text-stroke:0.6px #9b9b9b;">PHONE</span>
<div class="in" style="left:32px;top:242px;width:552px;height:80px"></div>
<div class="in" style="left:624px;top:242px;width:552px;height:80px"></div>
<div class="in" style="left:1216px;top:242px;width:552px;height:80px"></div>
<span style="position:absolute;left:49.98px;top:269.0px;font-family:'DejaVu Sans','Liberation Sans',sans-serif;font-size:28px;line-height:1;color:#2a2d31;font-weight:400;letter-spacing:1.544px;white-space:nowrap;">Teun</span>
<span style="position:absolute;left:641.97px;top:269.0px;font-family:'DejaVu Sans','Liberation Sans',sans-serif;font-size:28px;line-height:1;color:#2a2d31;font-weight:400;letter-spacing:-0.051px;white-space:nowrap;">van den Heuvel</span>
<span style="position:absolute;left:1233.45px;top:269.0px;font-family:'DejaVu Sans','Liberation Sans',sans-serif;font-size:28px;line-height:1;color:#2a2d31;font-weight:400;letter-spacing:-0.954px;white-space:nowrap;">06-51234600</span>
<span style="position:absolute;left:39.67px;top:368.5px;font-family:'DejaVu Sans','Liberation Sans',sans-serif;font-size:21.7px;line-height:1;color:#9b9b9b;font-weight:400;letter-spacing:5.670px;white-space:nowrap;-webkit-text-stroke:0.6px #9b9b9b;">EMAIL</span>
<span style="position:absolute;left:631.37px;top:368.5px;font-family:'DejaVu Sans','Liberation Sans',sans-serif;font-size:21.7px;line-height:1;color:#9b9b9b;font-weight:400;letter-spacing:5.197px;white-space:nowrap;-webkit-text-stroke:0.6px #9b9b9b;">HOUSE NO.</span>
<span style="position:absolute;left:1223.87px;top:368.5px;font-family:'DejaVu Sans','Liberation Sans',sans-serif;font-size:21.7px;line-height:1;color:#9b9b9b;font-weight:400;letter-spacing:4.716px;white-space:nowrap;-webkit-text-stroke:0.6px #9b9b9b;">STREET</span>
<div class="in" style="left:32px;top:408px;width:552px;height:80px"></div>
<div class="in" style="left:624px;top:408px;width:552px;height:80px"></div>
<div class="in" style="left:1216px;top:408px;width:552px;height:80px"></div>
<span style="position:absolute;left:49.25px;top:434.7px;font-family:'DejaVu Sans','Liberation Sans',sans-serif;font-size:28px;line-height:1;color:#2a2d31;font-weight:400;letter-spacing:0.121px;white-space:nowrap;">teun.vandenheuvel@gmail.com</span>
<span style="position:absolute;left:640.50px;top:434.7px;font-family:'DejaVu Sans','Liberation Sans',sans-serif;font-size:28px;line-height:1;color:#2a2d31;font-weight:400;letter-spacing:1.382px;white-space:nowrap;">78</span>
<span style="position:absolute;left:1233.25px;top:434.7px;font-family:'DejaVu Sans','Liberation Sans',sans-serif;font-size:28px;line-height:1;color:#2a2d31;font-weight:400;letter-spacing:0.477px;white-space:nowrap;">Haarlemmerdijk</span>
<span style="position:absolute;left:39.78px;top:534.5px;font-family:'DejaVu Sans','Liberation Sans',sans-serif;font-size:21.7px;line-height:1;color:#9b9b9b;font-weight:400;letter-spacing:4.638px;white-space:nowrap;-webkit-text-stroke:0.6px #9b9b9b;">CITY</span>
<span style="position:absolute;left:631.83px;top:534.5px;font-family:'DejaVu Sans','Liberation Sans',sans-serif;font-size:21.7px;line-height:1;color:#9b9b9b;font-weight:400;letter-spacing:5.360px;white-space:nowrap;-webkit-text-stroke:0.6px #9b9b9b;">ZIPCODE</span>
<span style="position:absolute;left:1224.08px;top:534.5px;font-family:'DejaVu Sans','Liberation Sans',sans-serif;font-size:21.7px;line-height:1;color:#9b9b9b;font-weight:400;letter-spacing:5.338px;white-space:nowrap;-webkit-text-stroke:0.6px #9b9b9b;">COUNTRY</span>
<div class="in" style="left:32px;top:575px;width:552px;height:80px"></div>
<div class="in" style="left:624px;top:575px;width:552px;height:80px"></div>
<span style="position:absolute;left:50.48px;top:602.0px;font-family:'DejaVu Sans','Liberation Sans',sans-serif;font-size:28px;line-height:1;color:#2a2d31;font-weight:400;letter-spacing:0.606px;white-space:nowrap;">Amsterdam</span>
<span style="position:absolute;left:640.42px;top:602.0px;font-family:'DejaVu Sans','Liberation Sans',sans-serif;font-size:28px;line-height:1;color:#2a2d31;font-weight:400;letter-spacing:-1.808px;white-space:nowrap;">1017MN</span>
<div class="sel" style="left:1215px;top:575px;width:552px"></div><span style="position:absolute;left:1240.53px;top:601.8px;font-family:'DejaVu Sans','Liberation Sans',sans-serif;font-size:28px;line-height:1;color:#555;font-weight:400;letter-spacing:-0.987px;white-space:nowrap;">-- Select --</span><svg style="position:absolute;left:1711px;top:609px" width="20" height="11" viewBox="0 0 20 11"><path d="M1.200 0h17.600a1 1 0 0 1 .75 1.700l-8.600 8.700a1.300 1.300 0 0 1-1.900 0L.45 1.700A1 1 0 0 1 1.200 0z" fill="#222"/></svg>
<span style="position:absolute;left:39.78px;top:701.9px;font-family:'DejaVu Sans','Liberation Sans',sans-serif;font-size:21.7px;line-height:1;color:#9b9b9b;font-weight:400;letter-spacing:4.995px;white-space:nowrap;-webkit-text-stroke:0.6px #9b9b9b;">CUSTOMER TYPE</span>
<span style="position:absolute;left:632.63px;top:701.9px;font-family:'DejaVu Sans','Liberation Sans',sans-serif;font-size:21.7px;line-height:1;color:#9b9b9b;font-weight:400;letter-spacing:5.190px;white-space:nowrap;-webkit-text-stroke:0.6px #9b9b9b;">APPOINTMENT LANGUAGE</span>
<div class="sel" style="left:30px;top:741px;width:552px"></div><span style="position:absolute;left:54.85px;top:767.8px;font-family:'DejaVu Sans','Liberation Sans',sans-serif;font-size:28px;line-height:1;color:#2a2d31;font-weight:400;letter-spacing:0.087px;white-space:nowrap;">Private</span><svg style="position:absolute;left:526px;top:775px" width="20" height="11" viewBox="0 0 20 11"><path d="M1.200 0h17.600a1 1 0 0 1 .75 1.700l-8.600 8.700a1.300 1.300 0 0 1-1.900 0L.45 1.700A1 1 0 0 1 1.200 0z" fill="#222"/></svg>
<div class="sel" style="left:623px;top:741px;width:552px"></div><span style="position:absolute;left:646.95px;top:767.8px;font-family:'DejaVu Sans','Liberation Sans',sans-serif;font-size:28px;line-height:1;color:#2a2d31;font-weight:400;letter-spacing:-0.032px;white-space:nowrap;">English (United States)</span><svg style="position:absolute;left:1119px;top:775px" width="20" height="11" viewBox="0 0 20 11"><path d="M1.200 0h17.600a1 1 0 0 1 .75 1.700l-8.600 8.700a1.300 1.300 0 0 1-1.900 0L.45 1.700A1 1 0 0 1 1.200 0z" fill="#222"/></svg>
<span style="position:absolute;left:39.07px;top:868.1px;font-family:'DejaVu Sans','Liberation Sans',sans-serif;font-size:21.7px;line-height:1;color:#9b9b9b;font-weight:400;letter-spacing:5.621px;white-space:nowrap;-webkit-text-stroke:0.6px #9b9b9b;">NOTES</span>
<div class="in" style="left:32px;top:908px;width:1740px;height:160px"></div>
<svg style="position:absolute;left:1752px;top:1048px" width="18" height="18" viewBox="0 0 18 18"><path d="M16.200 1.800L2 16M16.200 10L10.200 16" stroke="#555" stroke-width="1.500"/></svg>
<span style="position:absolute;left:48.67px;top:933.4px;font-family:'DejaVu Sans','Liberation Sans',sans-serif;font-size:28px;line-height:1;color:#2a2d31;font-weight:400;letter-spacing:0.212px;white-space:nowrap;">USB poort werkt niet</span>
<span style="position:absolute;left:29.43px;top:1162.7px;font-family:'DejaVu Sans','Liberation Sans',sans-serif;font-size:28px;line-height:1;color:#383c41;font-weight:400;letter-spacing:0.308px;white-space:nowrap;-webkit-text-stroke:0.45px #383c41;">Order Details</span>
<div class="dash" style="left:231px;top:1176px;width:1539px;background:repeating-linear-gradient(90deg,#8b8b8b 0 6px,transparent 6px 10.020px)"></div>
<span style="position:absolute;left:39.57px;top:1235.9px;font-family:'DejaVu Sans','Liberation Sans',sans-serif;font-size:21.7px;line-height:1;color:#9b9b9b;font-weight:400;letter-spacing:5.103px;white-space:nowrap;-webkit-text-stroke:0.6px #9b9b9b;">SERVICE METHOD</span>
<span style="position:absolute;left:929.27px;top:1235.9px;font-family:'DejaVu Sans','Liberation Sans',sans-serif;font-size:21.7px;line-height:1;color:#9b9b9b;font-weight:400;letter-spacing:5.598px;white-space:nowrap;-webkit-text-stroke:0.6px #9b9b9b;">LOCATION</span>
<div class="sel" style="left:30px;top:1275px;width:850px"></div><span style="position:absolute;left:55.03px;top:1301.8px;font-family:'DejaVu Sans','Liberation Sans',sans-serif;font-size:28px;line-height:1;color:#2a2d31;font-weight:400;letter-spacing:-0.086px;white-space:nowrap;">Come by our store</span><svg style="position:absolute;left:824px;top:1309px" width="20" height="11" viewBox="0 0 20 11"><path d="M1.200 0h17.600a1 1 0 0 1 .75 1.700l-8.600 8.700a1.300 1.300 0 0 1-1.900 0L.45 1.700A1 1 0 0 1 1.200 0z" fill="#222"/></svg>
<div class="sel" style="left:920px;top:1275px;width:850px"></div><span style="position:absolute;left:944.75px;top:1301.8px;font-family:'DejaVu Sans','Liberation Sans',sans-serif;font-size:28px;line-height:1;color:#2a2d31;font-weight:400;letter-spacing:-0.018px;white-space:nowrap;">Repair Shop Hasselt</span><svg style="position:absolute;left:1714px;top:1309px" width="20" height="11" viewBox="0 0 20 11"><path d="M1.200 0h17.600a1 1 0 0 1 .75 1.700l-8.600 8.700a1.300 1.300 0 0 1-1.900 0L.45 1.700A1 1 0 0 1 1.200 0z" fill="#222"/></svg>
<span style="position:absolute;left:38.87px;top:1402.1px;font-family:'DejaVu Sans','Liberation Sans',sans-serif;font-size:21.7px;line-height:1;color:#9b9b9b;font-weight:400;letter-spacing:6.333px;white-space:nowrap;-webkit-text-stroke:0.6px #9b9b9b;">MODEL</span>
<span style="position:absolute;left:929.48px;top:1402.1px;font-family:'DejaVu Sans','Liberation Sans',sans-serif;font-size:21.7px;line-height:1;color:#9b9b9b;font-weight:400;letter-spacing:5.609px;white-space:nowrap;-webkit-text-stroke:0.6px #9b9b9b;">COLOR</span>
<div class="sel" style="left:30px;top:1442px;width:850px"></div><svg style="position:absolute;left:824px;top:1476px" width="20" height="11" viewBox="0 0 20 11"><path d="M1.200 0h17.600a1 1 0 0 1 .75 1.700l-8.600 8.700a1.300 1.300 0 0 1-1.900 0L.45 1.700A1 1 0 0 1 1.200 0z" fill="#222"/></svg>
<div class="sel" style="left:920px;top:1442px;width:850px"></div><svg style="position:absolute;left:1714px;top:1476px" width="20" height="11" viewBox="0 0 20 11"><path d="M1.200 0h17.600a1 1 0 0 1 .75 1.700l-8.600 8.700a1.300 1.300 0 0 1-1.900 0L.45 1.700A1 1 0 0 1 1.200 0z" fill="#222"/></svg>
</div>
</body></html>
